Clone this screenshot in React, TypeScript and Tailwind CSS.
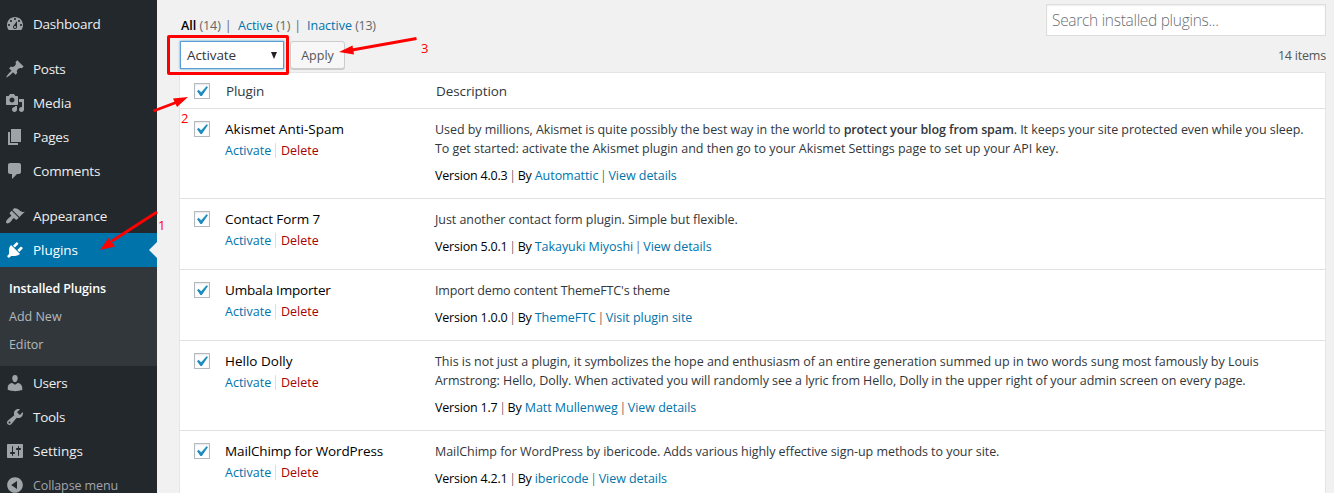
import type { ReactNode } from "react";

const icons = {
  dashboard:
    "M3.76 16h12.48c1.1-1.37 1.76-3.11 1.76-5 0-4.42-3.58-8-8-8s-8 3.58-8 8c0 1.89.66 3.63 1.76 5zM10 4c.55 0 1 .45 1 1s-.45 1-1 1-1-.45-1-1 .45-1 1-1zM6 6c.55 0 1 .45 1 1s-.45 1-1 1-1-.45-1-1 .45-1 1-1zm8 0c.55 0 1 .45 1 1s-.45 1-1 1-1-.45-1-1 .45-1 1-1zm-5.37 5.55L12 7v6c0 1.1-.9 2-2 2s-2-.9-2-2c0-.57.24-1.08.63-1.45zM4 10c.55 0 1 .45 1 1s-.45 1-1 1-1-.45-1-1 .45-1 1-1zm12 0c.55 0 1 .45 1 1s-.45 1-1 1-1-.45-1-1 .45-1 1-1zm-5 3c0-.55-.45-1-1-1s-1 .45-1 1 .45 1 1 1 1-.45 1-1z",
  post: "M10.44 3.02l1.82-1.82 6.36 6.35-1.83 1.82c-1.05-.68-2.48-.57-3.41.36l-.75.75c-.92.93-1.04 2.35-.35 3.41l-1.83 1.82-2.41-2.41-2.8 2.79c-.42.42-3.38 2.71-3.8 2.29s1.86-3.39 2.28-3.81l2.79-2.79L4.1 9.36l1.83-1.82c1.05.69 2.48.57 3.4-.36l.75-.75c.93-.92 1.05-2.35.36-3.41z",
  media:
    "M13 11V4c0-.55-.45-1-1-1h-1.67L9 1H5L3.67 3H2c-.55 0-1 .45-1 1v7c0 .55.45 1 1 1h10c.55 0 1-.45 1-1zM7 4.5c1.38 0 2.5 1.12 2.5 2.5S8.38 9.5 7 9.5 4.5 8.38 4.5 7 5.62 4.5 7 4.5zM14 6h5v10.5c0 1.38-1.12 2.5-2.5 2.5S14 17.88 14 16.5s1.12-2.5 2.5-2.5c.17 0 .34.02.5.05V9h-3V6zm-4 8.05V13h2v3.5c0 1.38-1.12 2.5-2.5 2.5S7 17.88 7 16.5 8.12 14 9.5 14c.17 0 .34.02.5.05z",
  page: "M6 15V2h10v13H6zm-1 1h8v2H3V5h2v11z",
  comments: "M5 2h9c1.1 0 2 .9 2 2v7c0 1.1-.9 2-2 2h-2l-5 5v-5H5c-1.1 0-2-.9-2-2V4c0-1.1.9-2 2-2z",
  appearance:
    "M14.48 11.06L7.41 3.99l1.5-1.5c.5-.56 2.3-.47 3.51.32 1.21.8 1.43 1.28 2.91 2.1 1.18.64 2.45 1.26 4.45.85zm-.71.71L6.7 4.7 4.93 6.47c-.39.39-.39 1.02 0 1.41l1.06 1.06c.39.39.39 1.03 0 1.42-.6.6-1.43 1.11-2.21 1.69-.35.26-.7.53-1.01.84C1.43 14.23.4 16.08 1.4 17.07c.99 1 2.84-.03 4.18-1.36.31-.31.58-.66.85-1.02.57-.78 1.08-1.61 1.69-2.21.39-.39 1.02-.39 1.41 0l1.06 1.06c.39.39 1.02.39 1.41 0z",
  plugins:
    "M13.11 4.36L9.87 7.6 8 5.73l3.24-3.24c.35-.34 1.05-.2 1.56.32.52.51.66 1.21.31 1.55zm-8 1.77l.91-1.12 9.01 9.01-1.19.84c-.71.71-2.63 1.16-3.82 1.16H6.14L4.9 17.26c-.59.59-1.54.59-2.12 0-.59-.58-.59-1.53 0-2.12l1.24-1.24v-3.88c0-1.13.4-3.19 1.09-3.89zm7.26 3.97l3.24-3.24c.34-.35 1.04-.21 1.55.31.52.51.66 1.21.31 1.55l-3.24 3.25z",
  users:
    "M10 9.25c-2.27 0-2.73-3.44-2.73-3.44C7 4.02 7.82 2 9.97 2c2.16 0 2.98 2.02 2.71 3.81 0 0-.41 3.44-2.68 3.44zm0 2.57L12.72 10c2.39 0 4.52 2.33 4.52 4.53v2.49s-3.65 1.13-7.24 1.13c-3.65 0-7.24-1.13-7.24-1.13v-2.49c0-2.25 1.94-4.48 4.47-4.48z",
  tools:
    "M16.68 9.77c-1.34 1.34-3.3 1.67-4.95.99l-5.41 6.52c-.99.99-2.59.99-3.58 0s-.99-2.59 0-3.57l6.52-5.42c-.68-1.65-.35-3.61.99-4.95 1.28-1.28 3.12-1.62 4.72-1.06l-2.89 2.89 2.82 2.82 2.86-2.87c.53 1.58.18 3.39-1.08 4.65zM3.81 16.21c.4.39 1.04.39 1.43 0 .4-.4.4-1.04 0-1.43-.39-.4-1.03-.4-1.43 0-.39.39-.39 1.03 0 1.43z",
  settings:
    "M18 16V4c0-.55-.45-1-1-1H3c-.55 0-1 .45-1 1v12c0 .55.45 1 1 1h14c.55 0 1-.45 1-1zM8 11h1c.55 0 1 .45 1 1s-.45 1-1 1H8v1.5c0 .28-.22.5-.5.5s-.5-.22-.5-.5V13H6c-.55 0-1-.45-1-1s.45-1 1-1h1V5.5c0-.28.22-.5.5-.5s.5.22.5.5V11zm5-2h-1c-.55 0-1-.45-1-1s.45-1 1-1h1V5.5c0-.28.22-.5.5-.5s.5.22.5.5V7h1c.55 0 1 .45 1 1s-.45 1-1 1h-1v5.5c0 .28-.22.5-.5.5s-.5-.22-.5-.5V9z",
  collapse:
    "M10 2.16c4.33 0 7.84 3.51 7.84 7.84s-3.51 7.84-7.84 7.84S2.16 14.33 2.16 10 5.71 2.16 10 2.16zm2 11.72V6.12L6.18 9.97z",
  check: "M14.83 4.89l1.34.94-5.81 8.38H9.02L5.78 9.67l1.34-1.25 2.57 2.4z",
};

function Icon({ name, className }: { name: keyof typeof icons; className: string }) {
  return (
    <svg viewBox="0 0 20 20" fill="currentColor" fillRule="evenodd" className={className}>
      <path d={icons[name]} />
    </svg>
  );
}

function MenuItem({ icon, label, track }: { icon: keyof typeof icons; label: string; track: string }) {
  return (
    <a className="flex h-[34px] shrink-0 items-center pl-[5px] text-[13.5px] text-[#eee]">
      <Icon name={icon} className="size-5 shrink-0 text-[#9ea3a8]" />
      <span className={`ml-2 ${track}`}>{label}</span>
    </a>
  );
}

function Sidebar() {
  return (
    <nav className="flex h-full w-[157px] shrink-0 flex-col bg-[#23282d] pt-[7px]">
      <MenuItem icon="dashboard" label="Dashboard" track="tracking-[-0.25px]" />
      <div className="h-[11px] shrink-0" />
      <MenuItem icon="post" label="Posts" track="tracking-[-0.3px]" />
      <MenuItem icon="media" label="Media" track="tracking-[-0.1px]" />
      <MenuItem icon="page" label="Pages" track="tracking-[-0.2px]" />
      <MenuItem icon="comments" label="Comments" track="tracking-[-0.2px]" />
      <div className="h-[11px] shrink-0" />
      <MenuItem icon="appearance" label="Appearance" track="tracking-[-0.13px]" />
      <a className="flex h-[34px] shrink-0 items-center bg-[#0073aa] pl-[5px] text-[13.5px] text-white">
        <Icon name="plugins" className="size-5 shrink-0" />
        <span className="ml-2 tracking-[-0.05px]">Plugins</span>
        <svg viewBox="0 0 8 16" className="ml-auto h-4 w-2">
          <path d="M8 0v16L0 8z" fill="#f1f1f1" />
        </svg>
      </a>
      <div className="flex h-[99px] shrink-0 flex-col bg-[#32373c] pt-[8px] pl-[9px] text-[12.5px] leading-7 text-[#b4b9be]">
        <a className="font-semibold tracking-[-0.1px] text-white">Installed Plugins</a>
        <a>Add New</a>
        <a className="tracking-[-0.1px]">Editor</a>
      </div>
      <MenuItem icon="users" label="Users" track="tracking-[-0.3px]" />
      <MenuItem icon="tools" label="Tools" track="tracking-[-0.3px]" />
      <MenuItem icon="settings" label="Settings" track="tracking-[-0.01px]" />
      <a className="flex h-[34px] shrink-0 items-center pl-[5px] text-[12.5px] text-[#a0a5aa]">
        <Icon name="collapse" className="size-5 shrink-0" />
        <span className="ml-2 pt-[2px] tracking-[-0.11px]">Collapse menu</span>
      </a>
    </nav>
  );
}

function Checkbox() {
  return (
    <span className="block size-4 shrink-0 border border-[#b4b9be] bg-white shadow-[inset_0_1px_2px_rgba(0,0,0,0.1)]">
      <Icon name="check" className="-mt-[3px] -ml-1 size-[21px] max-w-none text-[#1e8cbe]" />
    </span>
  );
}

function Bar() {
  return <span className="-mx-[1.6px] font-light">|</span>;
}

type Plugin = {
  name: string;
  track: string;
  height: string;
  description: ReactNode;
  version: string;
  author: string;
  link: string;
};

const plugins: Plugin[] = [
  {
    name: "Akismet Anti-Spam",
    track: "tracking-[0px]",
    height: "h-[90px]",
    description: (
      <>
        <p className="tracking-[-0.058px]">
          Used by millions, Akismet is quite possibly the best way in the world to{" "}
          <strong className="font-semibold tracking-[-0.11px]">protect your blog from spam</strong>. It keeps your site
          protected even while you sleep.
        </p>
        <p className="tracking-[-0.025px]">
          To get started: activate the Akismet plugin and then go to your Akismet Settings page to set up your API key.
        </p>
      </>
    ),
    version: "4.0.3",
    author: "Automattic",
    link: "View details",
  },
  {
    name: "Contact Form 7",
    track: "tracking-[-0.08px]",
    height: "h-[71px]",
    description: <p className="tracking-[-0.055px]">Just another contact form plugin. Simple but flexible.</p>,
    version: "5.0.1",
    author: "Takayuki Miyoshi",
    link: "View details",
  },
  {
    name: "Umbala Importer",
    track: "tracking-[-0.2px]",
    height: "h-[71px]",
    description: <p className="tracking-[-0.12px]">Import demo content ThemeFTC's theme</p>,
    version: "1.0.0",
    author: "ThemeFTC",
    link: "Visit plugin site",
  },
  {
    name: "Hello Dolly",
    track: "tracking-[0px]",
    height: "h-[90px]",
    description: (
      <>
        <p className="tracking-[-0.024px]">
          This is not just a plugin, it symbolizes the hope and enthusiasm of an entire generation summed up in two
          words sung most famously by Louis
        </p>
        <p className="tracking-[-0.056px]">
          Armstrong: Hello, Dolly. When activated you will randomly see a lyric from Hello, Dolly in the upper right of
          your admin screen on every page.
        </p>
      </>
    ),
    version: "1.7",
    author: "Matt Mullenweg",
    link: "View details",
  },
  {
    name: "MailChimp for WordPress",
    track: "tracking-[-0.133px]",
    height: "h-[71px]",
    description: (
      <p className="tracking-[-0.05px]">
        MailChimp for WordPress by ibericode. Adds various highly effective sign-up methods to your site.
      </p>
    ),
    version: "4.2.1",
    author: "ibericode",
    link: "View details",
  },
];

function PluginRow({ plugin }: { plugin: Plugin }) {
  return (
    <div className={`flex shrink-0 border-b border-[#e1e1e1] pl-[14px] ${plugin.height}`}>
      <div className="w-[31px] shrink-0 pt-3">
        <Checkbox />
      </div>
      <div className="w-[210px] shrink-0 pt-[10px]">
        <div className={`text-[13.5px] leading-5 text-black ${plugin.track}`}>{plugin.name}</div>
        <div className="mt-[2px] flex text-[12.5px] leading-[19px]">
          <a className="w-[50px] text-[#0073aa]">Activate</a>
          <span className="my-[2px] w-px bg-[#ddd]" />
          <a className="ml-[5px] text-[#a00]">Delete</a>
        </div>
      </div>
      <div className="pt-[11px] text-[12.5px] leading-[19px] whitespace-nowrap text-[#32373c]">
        {plugin.description}
        <p className="mt-2 text-black">
          <span className="tracking-[-0.2px]">Version {plugin.version}</span> <Bar />{" "}
          <span className="tracking-[-0.15px]">By </span>
          <a className="tracking-[-0.05px] text-[#0073aa]">{plugin.author}</a> <Bar />{" "}
          <a className="tracking-[-0.05px] text-[#0073aa]">{plugin.link}</a>
        </p>
      </div>
    </div>
  );
}

function Annotations() {
  return (
    <div className="pointer-events-none absolute inset-0">
      <svg viewBox="0 0 1334 493" className="h-full w-full" fill="#f00" stroke="#f00">
        <rect x="168.5" y="36.5" width="119" height="37" rx="0.5" fill="none" strokeWidth="3" />
        <path d="M157 212L112 241M153.500 111L176 102.500M416.500 38.500L352 50" fill="none" strokeWidth="2.800" />
        <path d="M100 250L108.500 238L115 246.500zM188 97L173 98.500L177 107zM339 52L352.500 45.500L354 54.500z" stroke="none" />
      </svg>
      <span className="absolute top-[216px] left-[158px] text-[13px] leading-[18px] text-[#f00]">1</span>
      <span className="absolute top-[109px] left-[181px] text-[13px] leading-[18px] text-[#f00]">2</span>
      <span className="absolute top-[39px] left-[421px] text-[13px] leading-[18px] text-[#f00]">3</span>
    </div>
  );
}

export default function App() {
  return (
    <div className="relative flex h-[493px] w-[1334px] overflow-hidden bg-[#f1f1f1] font-['Open_Sans','Noto_Sans',sans-serif]">
      <Sidebar />
      <main className="flex flex-1 flex-col pr-2 pl-[22px]">
        <div className="flex h-[36px] shrink-0 justify-between pt-1">
          <div className="flex pt-[12px] pl-[2px] text-[12.5px] leading-5 text-[#666]">
            <span className="w-[57px]">
              <a className="font-semibold text-black">All</a> <span className="tracking-[-0.1px]">(14)</span>
              <span className="ml-[4px]">|</span>
            </span>
            <span className="w-[69px]">
              <a className="text-[#0073aa]">Active</a> <span className="tracking-[-0.1px]">(1)</span>
              <span className="ml-[4px]">|</span>
            </span>
            <span>
              <a className="text-[#0073aa]">Inactive</a> <span className="tracking-[-0.3px]">(13)</span>
            </span>
          </div>
          <div className="flex h-8 w-[280px] items-center border border-[#ddd] bg-white pt-[2px] pl-[5px] text-[15.5px] font-light tracking-[-0.3px] text-[#6b7075] shadow-[inset_0_1px_2px_rgba(0,0,0,0.07)]">
            Search installed plugins...
          </div>
        </div>
        <div className="mt-[5px] flex h-[31px] shrink-0 items-start">
          <div className="ml-[1px] flex h-[28px] w-[104px] items-center border border-[#5b9dd9] bg-white pl-[6px] text-[13.5px] text-[#32373c] shadow-[0_0_2px_rgba(30,140,190,0.8)]">
            <span className="tracking-[-0.1px]">Activate</span>
            <svg viewBox="0 0 6 7" className="mr-[6px] ml-auto h-[7px] w-[6px]">
              <path d="M0 0h6L3 7z" fill="#222" />
            </svg>
          </div>
          <button className="ml-[6px] flex h-[28px] w-[55px] items-center justify-center rounded-[3px] border border-[#ccc] bg-[#f7f7f7] pt-[2px] text-[12.5px] text-[#555] shadow-[0_1px_0_#ccc]">
            Apply
          </button>
          <span className="ml-auto pt-[5px] text-[12.5px] leading-[19px] tracking-[-0.2px] text-[#555]">14 items</span>
        </div>
        <section className="flex flex-1 flex-col overflow-hidden border border-b-0 border-[#e5e5e5] bg-white">
          <div className="flex h-9 shrink-0 items-center border-b border-[#e1e1e1] pl-[14px] text-[13.5px] tracking-[-0.1px] text-[#32373c]">
            <div className="w-8">
              <Checkbox />
            </div>
            <div className="w-[210px] pt-px">Plugin</div>
            <div className="pt-px">Description</div>
          </div>
          {plugins.map((p) => (
            <PluginRow key={p.name} plugin={p} />
          ))}
        </section>
      </main>
      <Annotations />
    </div>
  );
}
